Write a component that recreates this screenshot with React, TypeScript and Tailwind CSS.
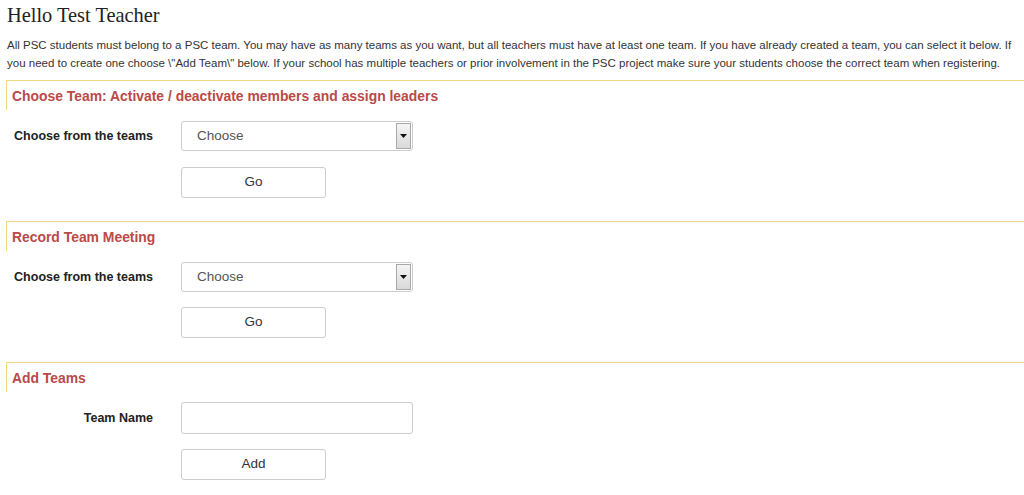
import * as React from "react"

function SectionHeader({ title }: { title: string }) {
  return (
    <div className="ml-[6px] flex h-[30px] items-center border-l border-t border-[#efd97c] pl-[5px] pt-[2px]">
      <span className="text-[13.9px] font-bold text-[#b94a48]">{title}</span>
    </div>
  )
}

function FakeSelect() {
  return (
    <div className="relative flex h-[30px] w-[232px] items-center rounded-[3px] border border-[#cccccc] bg-white pl-[15px] text-[13.5px] text-[#555555]">
      Choose
      {/* old-style dropdown arrow */}
      <div className="absolute right-[1px] top-[1px] bottom-[1px] flex w-[15px] items-center justify-center border border-[#a8a8a8] bg-gradient-to-b from-[#f4f4f4] to-[#d9d9d9]">
        <svg width="7" height="4" viewBox="0 0 7 4">
          <path d="M0 0 H7 L3.5 4 Z" fill="#111" />
        </svg>
      </div>
    </div>
  )
}

function FormRow({ label, children }: { label: string; children: React.ReactNode }) {
  return (
    <div className="flex items-center">
      <div className="w-[153px] text-right text-[12.5px] font-bold text-[#222222]">{label}</div>
      <div className="ml-[28px]">{children}</div>
    </div>
  )
}

function ActionButton({ label }: { label: string }) {
  return (
    <div className="ml-[181px] flex h-[31px] w-[145px] items-center justify-center rounded-[3px] border border-[#cccccc] bg-white text-[13.5px] text-[#333333]">
      {label}
    </div>
  )
}

export default function App() {
  return (
    <div className="min-h-[495px] bg-white font-['Liberation_Sans',Arial,sans-serif] text-[#333333]">
      <h1 className="px-[7px] pt-[3px] font-['Liberation_Serif','Times_New_Roman',serif] text-[20.4px] leading-[24px] text-[#222222]">
        Hello Test Teacher
      </h1>
      <p className="mt-[9px] whitespace-nowrap px-[7px] text-[11.5px] leading-[18px] text-[#333333]">
        All PSC students must belong to a PSC team. You may have as many teams as you want, but all teachers must have at least one team. If you have already created a team, you can select it below. If
        <br />
        you need to create one choose \"Add Team\" below. If your school has multiple teachers or prior involvement in the PSC project make sure your students choose the correct team when registering.
      </p>

      <div className="mt-[8px]">
        <SectionHeader title="Choose Team: Activate / deactivate members and assign leaders" />
        <div className="mt-[11px] flex flex-col gap-[16px]">
          <FormRow label="Choose from the teams">
            <FakeSelect />
          </FormRow>
          <ActionButton label="Go" />
        </div>
      </div>

      <div className="mt-[23px]">
        <SectionHeader title="Record Team Meeting" />
        <div className="mt-[11px] flex flex-col gap-[15px]">
          <FormRow label="Choose from the teams">
            <FakeSelect />
          </FormRow>
          <ActionButton label="Go" />
        </div>
      </div>

      <div className="mt-[24px]">
        <SectionHeader title="Add Teams" />
        <div className="mt-[10px] flex flex-col gap-[15px]">
          <FormRow label="Team Name">
            <input
              type="text"
              className="h-[32px] w-[232px] rounded-[3px] border border-[#cccccc] bg-white px-[10px] text-[13px] outline-none"
            />
          </FormRow>
          <ActionButton label="Add" />
        </div>
      </div>
    </div>
  )
}
